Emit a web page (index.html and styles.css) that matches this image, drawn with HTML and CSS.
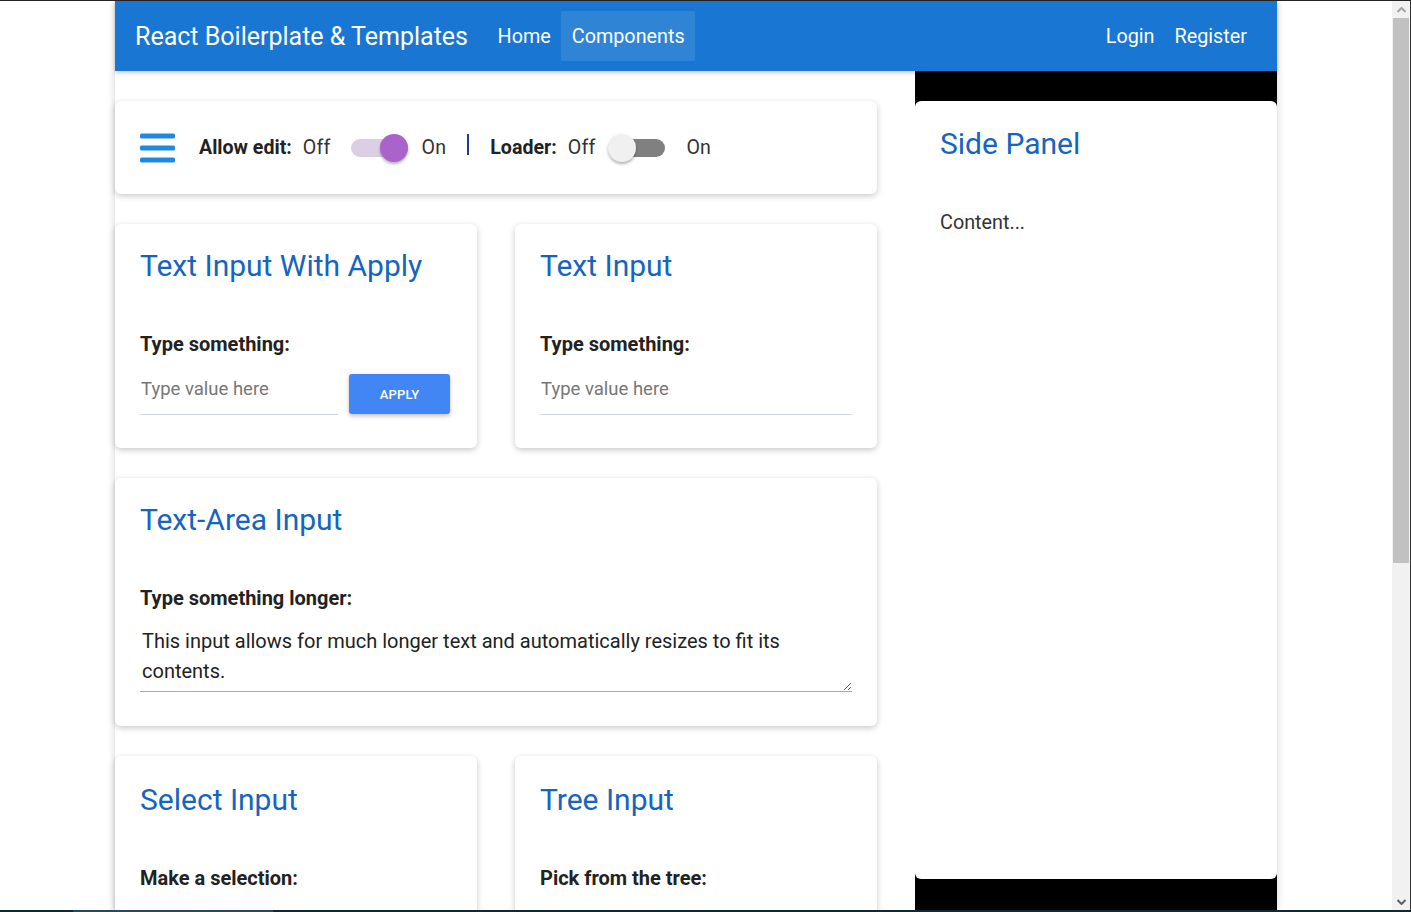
FILE: index.html
```html
<!DOCTYPE html>
<html lang="en">
<head>
<meta charset="utf-8">
<title>React Boilerplate &amp; Templates</title>
<link rel="stylesheet" href="styles.css">
</head>
<body>
<div class="screen">
  <div class="topline"></div>
  <div class="body-row">
    <div class="viewport">
      <div class="app">
        <header class="appbar">
          <span class="brand">React Boilerplate &amp; Templates</span>
          <nav class="nav">
            <a class="nav-link">Home</a>
            <a class="nav-link active">Components</a>
          </nav>
          <nav class="nav nav-right">
            <a class="nav-link">Login</a>
            <a class="nav-link">Register</a>
          </nav>
        </header>
        <div class="content">
          <main class="main-col">
            <section class="card toolbar">
              <svg class="menu-icon" width="35" height="30" viewBox="0 0 35 30">
                <rect x="0" y="0.5" width="35" height="5" rx="1.5" fill="#1e88e5"/>
                <rect x="0" y="12.5" width="35" height="5" rx="1.5" fill="#1e88e5"/>
                <rect x="0" y="24.5" width="35" height="5" rx="1.5" fill="#1e88e5"/>
              </svg>
              <span class="tb-label">Allow edit:</span>
              <span class="tb-text">Off</span>
              <span class="switch switch-on"><span class="track"></span><span class="thumb"></span></span>
              <span class="tb-text">On</span>
              <span class="sep"></span>
              <span class="tb-label">Loader:</span>
              <span class="tb-text">Off</span>
              <span class="switch switch-off"><span class="track"></span><span class="thumb"></span></span>
              <span class="tb-text">On</span>
            </section>

            <div class="card-row">
              <section class="card">
                <h2 class="card-title">Text Input With Apply</h2>
                <div class="field-label">Type something:</div>
                <div class="apply-row">
                  <input class="text-input" type="text" placeholder="Type value here">
                  <button class="apply-btn">APPLY</button>
                </div>
              </section>
              <section class="card">
                <h2 class="card-title">Text Input</h2>
                <div class="field-label">Type something:</div>
                <input class="text-input" type="text" placeholder="Type value here">
              </section>
            </div>

            <section class="card card-textarea">
              <h2 class="card-title">Text-Area Input</h2>
              <div class="field-label">Type something longer:</div>
              <textarea class="text-area" rows="2">This input allows for much longer text and automatically resizes to fit its contents.</textarea>
            </section>

            <div class="card-row card-row-last">
              <section class="card">
                <h2 class="card-title">Select Input</h2>
                <div class="field-label">Make a selection:</div>
              </section>
              <section class="card">
                <h2 class="card-title">Tree Input</h2>
                <div class="field-label">Pick from the tree:</div>
              </section>
            </div>
          </main>
          <aside class="side">
            <div class="side-card">
              <h2 class="card-title">Side Panel</h2>
              <p class="side-text">Content...</p>
            </div>
          </aside>
        </div>
      </div>
    </div>
    <div class="scrollbar">
      <div class="sb-btn">
        <svg width="9" height="6" viewBox="0 0 9 6"><path d="M0.5 5 L4.5 1 L8.5 5" fill="none" stroke="#a3a3a3" stroke-width="2"/></svg>
      </div>
      <div class="sb-track"><div class="sb-thumb"></div></div>
      <div class="sb-btn">
        <svg width="9" height="6" viewBox="0 0 9 6"><path d="M0.5 1 L4.5 5 L8.5 1" fill="none" stroke="#606060" stroke-width="2"/></svg>
      </div>
    </div>
  </div>
  <div class="taskbar"><span class="tb-seg"></span></div>
</div>
</body>
</html>
```

FILE: styles.css
```css
* { box-sizing: border-box; }

html, body {
  margin: 0;
  padding: 0;
  overflow: hidden;
  background: #fff;
  font-family: Roboto, "Liberation Sans", Arial, sans-serif;
}

.screen {
  width: 1411px;
  height: 912px;
  display: flex;
  flex-direction: column;
}

.topline {
  height: 1px;
  background: #222;
  flex: none;
}

.body-row {
  height: 909px;
  display: flex;
  flex: none;
}

.viewport {
  width: 1392px;
  height: 909px;
  overflow: hidden;
  background: #fff;
}

.app {
  width: 1162px;
  margin: 0 auto;
  height: 909px;
  display: flex;
  flex-direction: column;
  box-shadow: 0 0 8px rgba(0, 0, 0, 0.18);
  background: #fff;
}

/* header */
.appbar {
  height: 70px;
  flex: none;
  background: #1976d2;
  display: flex;
  align-items: center;
  padding: 0 20px;
  color: #fff;
  position: relative;
  z-index: 2;
  box-shadow: 0 2px 4px rgba(0, 0, 0, 0.2);
}

.brand {
  font-size: 25px;
  font-weight: 400;
  margin-right: 19px;
}

.nav {
  display: flex;
  align-items: center;
}

.nav-right {
  margin-left: auto;
}

.nav-link {
  display: block;
  height: 50px;
  line-height: 52px;
  padding: 0 10.5px;
  font-size: 19.8px;
  color: #fff;
  cursor: pointer;
}

.nav-right .nav-link {
  padding: 0 10px;
}

.nav-link.active {
  background: rgba(255, 255, 255, 0.1);
}

/* content */
.content {
  flex: 1;
  display: flex;
  gap: 38px;
  min-height: 0;
}

.main-col {
  width: 762px;
  padding-top: 30px;
  display: flex;
  flex-direction: column;
  gap: 30px;
}

.main-col > * {
  flex: none;
}

.card {
  background: #fff;
  border-radius: 6px;
  box-shadow: 0 2px 6px rgba(0, 0, 0, 0.22);
  padding: 24px 25px 33px;
}

.card-textarea {
  padding-bottom: 34px;
}

.card-row {
  display: flex;
  gap: 38px;
}

.card-row .card {
  width: 362px;
  flex: none;
}

.card-row-last .card {
  padding-top: 26px;
}

.card-title {
  margin: 0 0 48px;
  font-size: 30px;
  line-height: 36px;
  font-weight: 400;
  color: #1565c0;
}

.field-label {
  font-size: 20px;
  line-height: 24px;
  font-weight: 700;
  color: #222;
  margin-bottom: 16px;
}

/* toolbar */
.toolbar {
  height: 93px;
  padding: 0 25px;
  display: flex;
  align-items: center;
}

.menu-icon {
  flex: none;
  margin-right: 24px;
}

.tb-label {
  font-size: 19.6px;
  font-weight: 700;
  color: #222;
  margin-right: 11px;
}

.tb-text {
  font-size: 19.6px;
  color: #333;
  letter-spacing: 0.2px;
}

.switch {
  position: relative;
  width: 57px;
  height: 28px;
  flex: none;
}

.switch .track {
  position: absolute;
  left: 0;
  right: 0;
  top: 5px;
  height: 18px;
  border-radius: 9px;
}

.switch .thumb {
  position: absolute;
  top: 0;
  width: 28px;
  height: 28px;
  border-radius: 50%;
  box-shadow: 0 2px 3px rgba(0, 0, 0, 0.3);
}

.switch-on {
  margin: 0 14px 0 20px;
}

.switch-on .track { background: #dccfe3; }
.switch-on .thumb { right: 0; background: #ab63cc; }

.switch-off {
  width: 53px;
  margin: 0 21px 0 17px;
}

.switch-off .track { background: #808080; }
.switch-off .thumb { left: -4px; background: #f0f0f0; }

.sep {
  width: 2px;
  height: 21px;
  background: #283593;
  margin: -6px 21px 0 21px;
}

/* inputs */
.apply-row {
  display: flex;
  align-items: flex-end;
}

.text-input {
  display: block;
  width: 100%;
  height: 43px;
  padding: 0 0 8px 1px;
  border: none;
  border-bottom: 1px solid #ccd3dc;
  font-family: Roboto, "Liberation Sans", Arial, sans-serif;
  font-size: 18.5px;
  color: #333;
  outline: none;
  background: transparent;
}

.text-input::placeholder {
  color: #777;
}

.apply-row .text-input {
  flex: 1;
  width: auto;
  min-width: 0;
}

.apply-btn {
  flex: none;
  width: 101px;
  height: 40px;
  margin: 0 2px 1px 11px;
  border: none;
  border-radius: 3px;
  background: #4285f4;
  color: #fff;
  font-family: Roboto, "Liberation Sans", Arial, sans-serif;
  font-size: 13px;
  font-weight: 500;
  letter-spacing: 0.2px;
  box-shadow: 0 2px 4px rgba(0, 0, 0, 0.25);
  cursor: pointer;
}

.text-area {
  display: block;
  width: 100%;
  height: 66px;
  margin-top: 4px;
  padding: 0 20px 0 2px;
  border: none;
  border-bottom: 1px solid #aaa;
  font-family: Roboto, "Liberation Sans", Arial, sans-serif;
  font-size: 20px;
  line-height: 30px;
  color: #222;
  outline: none;
  resize: vertical;
  overflow: hidden;
  background: transparent;
}

/* side panel */
.side {
  width: 362px;
  flex: none;
  background: #000;
  padding: 30px 0 31px;
  display: flex;
}

.side-card {
  flex: 1;
  background: #fff;
  border-radius: 6px;
  padding: 25px 25px;
}

.side-text {
  margin: 0;
  font-size: 19.8px;
  line-height: 26px;
  color: #333;
}

/* fake scrollbar */
.scrollbar {
  width: 19px;
  height: 909px;
  background: #f1f1f1;
  border-right: 1px solid #333;
  display: flex;
  flex-direction: column;
}

.sb-btn {
  height: 17px;
  display: flex;
  align-items: center;
  justify-content: center;
  flex: none;
}

.sb-track {
  flex: 1;
  padding: 0 1px;
}

.sb-thumb {
  height: 545px;
  background: #c1c1c1;
}

/* bottom edge */
.taskbar {
  height: 2px;
  background: #0d2a33;
  flex: none;
  display: flex;
}

.tb-seg {
  display: block;
  width: 200px;
  margin-left: 73px;
  background: #1d4d5c;
}
```
